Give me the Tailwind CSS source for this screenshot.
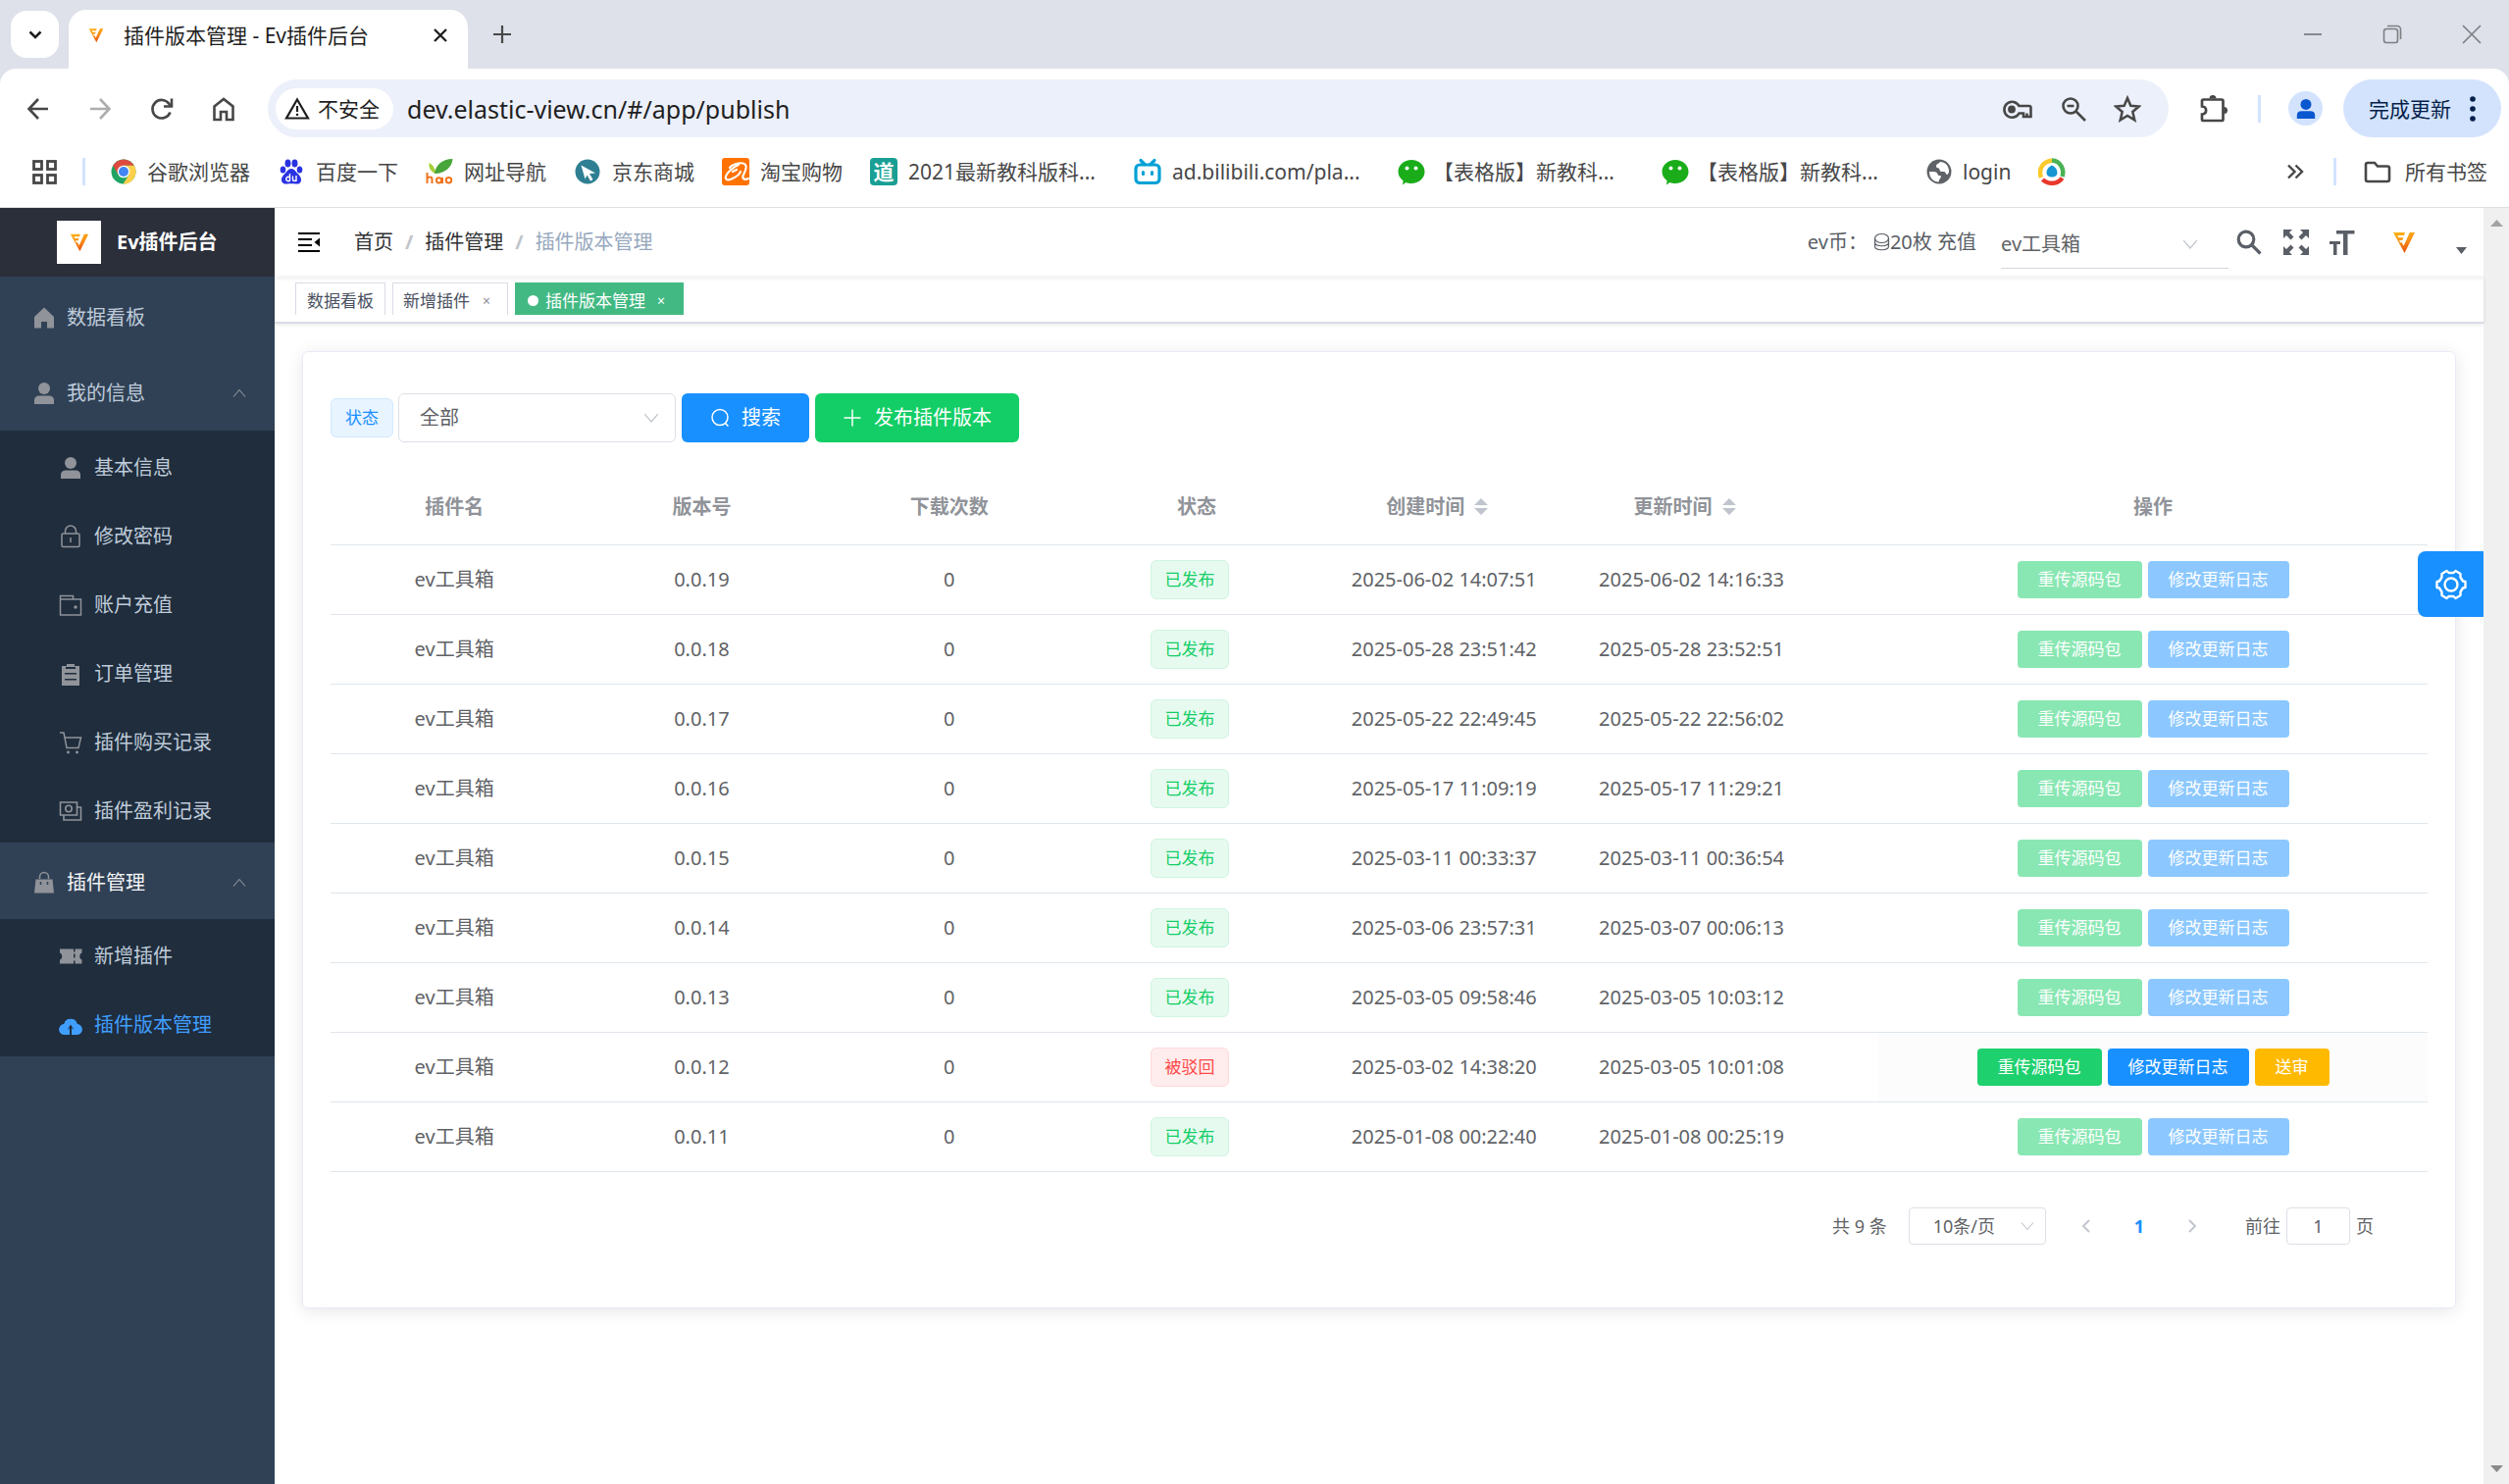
<!DOCTYPE html>
<html lang="zh-CN">
<head>
<meta charset="utf-8">
<title>插件版本管理 - Ev插件后台</title>
<script src="https://cdn.jsdelivr.net/npm/@tailwindcss/browser@4"></script>
</head>
<body class="flex min-h-screen flex-col bg-white font-['Noto_Sans','Noto_Sans_CJK_SC',sans-serif] text-[20px] leading-7 text-[#606266]">

<svg class="absolute size-0" aria-hidden="true">
  <defs>
    <linearGradient id="ev-g" x1="0" y1="0" x2="0.3" y2="1"><stop offset="0" stop-color="#fdb515"/><stop offset="0.5" stop-color="#fb9316"/><stop offset="1" stop-color="#e9560f"/></linearGradient>
  </defs>
  <symbol id="ev" viewBox="0 0 24 24"><path fill="url(#ev-g)" d="M1 2h12l-1 3H5.500l.8 2.300h5L10.300 10H7.200l.8 2.300h1.800l1.800 3.500L17.800 2H23L12.500 23z"/></symbol>
  <symbol id="down" viewBox="0 0 16 16"><path d="M2 4.500l6 7 6-7" fill="none" stroke="currentColor" stroke-width="1.100"/></symbol>
  <symbol id="up" viewBox="0 0 16 16"><path d="M2 11.500l6-7 6 7" fill="none" stroke="currentColor" stroke-width="1.100"/></symbol>
  <symbol id="user" viewBox="0 0 24 24"><circle cx="12" cy="7" r="6"/><path d="M2 23v-4c0-3 2-4.500 5-4.500h10c3 0 5 1.500 5 4.500v4z"/></symbol>
  <symbol id="wechat" viewBox="0 0 28 28"><path fill="#1aad19" d="M14 2c7.500 0 13.500 5.300 13.500 12S21.500 26 14 26c-2 0-4-.3-5.600-1L5 27.500l.6-4.300C2.500 21 .5 17.700.5 14 .5 7.300 6.500 2 14 2z"/><circle cx="9.500" cy="10.500" r="2" fill="#fff"/><circle cx="18.500" cy="10.500" r="2" fill="#fff"/></symbol>
</svg>

<header class="bg-[#dee1e9]">
  <div class="flex h-[70px] items-end pl-[11px]">
    <button class="mb-[11px] grid h-12 w-[49px] place-items-center rounded-2xl bg-white text-[#1f1f1f]" aria-label="搜索标签页"><svg class="size-4" viewBox="0 0 16 16"><path d="M2.500 5.500L8 11l5.500-5.500" fill="none" stroke="currentColor" stroke-width="2.500"/></svg></button>
    <div class="ml-[10px] flex h-[60px] w-[407px] items-center rounded-t-[18px] bg-white px-5 pt-2 pb-4 text-[21px] text-[#1f1f1f]">
      <svg class="size-4"><use href="#ev"/></svg>
      <span class="ml-5 flex-1 whitespace-nowrap">插件版本管理 - Ev插件后台</span>
      <button aria-label="关闭标签页"><svg class="size-4" viewBox="0 0 16 16"><path d="M2 2l12 12M14 2L2 14" stroke="#1f1f1f" stroke-width="2.300"/></svg></button>
    </div>
    <button class="mb-[25px] ml-[25px]" aria-label="新标签页"><svg class="size-5" viewBox="0 0 20 20"><path d="M10 1v18M1 10h18" stroke="#474747" stroke-width="2.200"/></svg></button>
    <div class="mb-[25px] ml-auto flex gap-[61px] pr-7 text-[#7d7f84]">
      <button aria-label="最小化"><svg class="size-5" viewBox="0 0 20 20"><path d="M1 10h18" stroke="currentColor" stroke-width="1.800"/></svg></button>
      <button aria-label="还原"><svg class="size-5" viewBox="0 0 20 20" fill="none" stroke="currentColor" stroke-width="1.600"><rect x="1.500" y="4.500" width="14" height="14" rx="2.500"/><path d="M5 1.500h10a3.500 3.500 0 0 1 3.500 3.500v10"/></svg></button>
      <button aria-label="关闭"><svg class="size-5" viewBox="0 0 20 20"><path d="M1 1l18 18M19 1L1 19" stroke="currentColor" stroke-width="1.700"/></svg></button>
    </div>
  </div>

  <div class="flex h-[81px] items-center rounded-t-2xl bg-white pr-2 pl-[26px] text-[#474747]">
    <div class="flex gap-[37px]">
      <button aria-label="后退"><svg class="size-[26px]" viewBox="0 0 26 26" fill="none" stroke="currentColor" stroke-width="2.600"><path d="M23 13H4M13 3L3.500 13l9.500 10"/></svg></button>
      <button class="text-[#adadad]" aria-label="前进"><svg class="size-[26px]" viewBox="0 0 26 26" fill="none" stroke="currentColor" stroke-width="2.600"><path d="M3 13h19M13 3l9.500 10-9.500 10"/></svg></button>
      <button aria-label="重新加载"><svg class="size-[26px]" viewBox="0 0 26 26" fill="none" stroke="currentColor" stroke-width="2.600"><path d="M21.500 16.500a9.300 9.300 0 1 1-1-8.500l2 2.500M23 2.500v8h-8"/></svg></button>
      <button aria-label="主页"><svg class="size-[26px]" viewBox="0 0 26 26" fill="none" stroke="currentColor" stroke-width="2.600"><path d="M3.500 10.500L13 3l9.500 7.500V24H16v-8h-6v8H3.500z"/></svg></button>
    </div>
    <div class="ml-[32px] flex h-[59px] flex-1 items-center rounded-full bg-[#ecf0fa] pr-7 pl-2">
      <button class="flex h-[42px] w-[120px] items-center gap-2 rounded-full bg-white pl-[9px] text-[21px] text-[#1f1f1f]"><svg class="size-[26px]" viewBox="0 0 26 26"><path d="M13 3.500L24 22.500H2z" fill="none" stroke="#1f1f1f" stroke-width="2.200"/><path d="M13 10v6M13 17.700v2.300" stroke="#1f1f1f" stroke-width="2.200"/></svg>不安全</button>
      <input class="ml-[14px] h-10 flex-1 bg-transparent text-[25px] text-[#1f1f1f] outline-none" aria-label="地址栏" value="dev.elastic-view.cn/#/app/publish">
      <div class="flex items-center gap-[27px]">
        <button aria-label="密码"><svg class="h-7 w-8" viewBox="0 0 32 28" fill="none" stroke="currentColor" stroke-width="2.600"><path d="M17.500 11a8 8 0 1 0 0 7.500H22V22h7.500v-9.500a1.500 1.500 0 0 0-1.500-1.500zM25.500 18.500V22"/><circle cx="10" cy="14.500" r="2.600" fill="currentColor"/></svg></button>
        <button aria-label="缩放"><svg class="size-7" viewBox="0 0 28 28" fill="none" stroke="currentColor" stroke-width="2.600"><circle cx="11" cy="11" r="7.500"/><path d="M16.500 16.500L26 26M7.500 11h7"/></svg></button>
        <button aria-label="收藏"><svg class="size-7" viewBox="0 0 28 28" fill="none" stroke="currentColor" stroke-width="2.500"><path d="M14 3l3.300 7.800 8.400.7-6.400 5.500 2 8.300L14 20.900l-7.300 4.400 2-8.300-6.400-5.500 8.400-.7z"/></svg></button>
      </div>
    </div>
    <button class="ml-[31px]" aria-label="扩展程序"><svg class="size-[30px]" viewBox="0 0 30 30" fill="none" stroke="currentColor" stroke-width="2.700"><path d="M4.500 5.500h18.500a1.500 1.500 0 0 1 1.500 1.500v18.500a1.500 1.500 0 0 1-1.500 1.500H4.500A1.500 1.500 0 0 1 3 25.500V20.500c5.500-.5 5.500-7.500 0-8V7a1.500 1.500 0 0 1 1.500-1.500z"/><path d="M10.500 4.500a3.500 3.500 0 0 1 7 0zM25.500 13a3.500 3.500 0 0 1 0 7z" fill="currentColor" stroke="none"/></svg></button>
    <span class="ml-[30px] h-7 w-[3px] bg-[#d3e3fd]"></span>
    <button class="ml-7 grid size-[35px] place-items-center rounded-full bg-[#d3e3fd] text-[#0b57d0]" aria-label="个人资料"><svg class="size-[22px]" viewBox="0 0 24 24" fill="currentColor"><use href="#user"/></svg></button>
    <button class="ml-[21px] flex h-[59px] w-[161px] items-center justify-between rounded-full bg-[#d3e3fd] px-[26px] text-[21px] whitespace-nowrap text-[#041e49]">完成更新<svg class="h-7 w-[6px]" viewBox="0 0 6 28" fill="currentColor"><circle cx="3" cy="4" r="2.800"/><circle cx="3" cy="14" r="2.800"/><circle cx="3" cy="24" r="2.800"/></svg></button>
  </div>

  <nav class="flex h-[61px] items-center border-b border-[#dcdfe3] bg-white pr-[22px] pb-3 pl-8 text-[21px] whitespace-nowrap text-[#474747]" aria-label="书签">
    <button aria-label="应用"><svg class="size-[27px]" viewBox="0 0 27 27" fill="none" stroke="currentColor" stroke-width="2.800"><rect x="2.500" y="2.500" width="8" height="8"/><rect x="16.500" y="2.500" width="8" height="8"/><rect x="2.500" y="16.500" width="8" height="8"/><rect x="16.500" y="16.500" width="8" height="8"/></svg></button>
    <span class="mx-[25px] h-7 w-[3px] bg-[#d3e3fd]"></span>
    <div class="flex flex-1 gap-[28px]">
      <a href="#" class="flex items-center gap-[10px]"><svg class="size-7" viewBox="0 0 28 28"><circle cx="14" cy="14" r="12.500" fill="#1fa463"/><path d="M3.200 7.700A12.500 12.500 0 0 1 24.800 7.700H14L8.500 17z" fill="#dd4b3e"/><path d="M14 7.700h10.800A12.500 12.500 0 0 1 13.500 26.500L19.500 17z" fill="#fdd04b"/><circle cx="14" cy="14" r="6.300" fill="#fff"/><circle cx="14" cy="14" r="5" fill="#4285f4"/></svg>谷歌浏览器</a>
      <a href="#" class="flex items-center gap-[11px]"><svg class="size-7" viewBox="0 0 28 28" fill="#2932e1"><ellipse cx="10.500" cy="5.500" rx="3" ry="4"/><ellipse cx="17.500" cy="5.500" rx="3" ry="4"/><ellipse cx="5.500" cy="12" rx="2.800" ry="3.600"/><ellipse cx="22.500" cy="12" rx="2.800" ry="3.600"/><path d="M14 11c3 0 4.500 3 6.500 5s4 4 3.500 7-3 4-5.500 3.500-7-.5-9 0S4.500 26 4 23s1.500-5 3.500-7 3.500-5 6.500-5z"/><path d="M12.500 16v8M12.500 20a2.200 2.200 0 1 0 0 3M15.500 18.500v3.500c0 2 3.500 2 3.500 0v-3.500M19 18v6" fill="none" stroke="#fff" stroke-width="1.400"/></svg>百度一下</a>
      <a href="#" class="flex items-center gap-[11px]"><svg class="size-7" viewBox="0 0 28 28"><path d="M10 14C9 9 6 6 3.500 5 3 10 5 14 10 16z" fill="#a5ce39"/><path d="M9 16C10 8 16 1 27.500 1 27 9 20 16 9 16z" fill="#47a53a"/><path d="M1.500 15v11M1.500 21c1-2 5-2 5 .5V26M17 20v6M28 23" fill="none" stroke="#f0741f" stroke-width="2"/><circle cx="13.500" cy="22.800" r="2.600" fill="none" stroke="#f0741f" stroke-width="2"/><circle cx="23.500" cy="22.800" r="2.800" fill="none" stroke="#f0741f" stroke-width="2"/></svg>网址导航</a>
      <a href="#" class="flex items-center gap-[11px]"><svg class="size-7" viewBox="0 0 28 28"><circle cx="14" cy="14" r="12.500" fill="#2f7f93"/><path d="M7.500 7.500l14.500 8-6 .5 3.500 6-2.500 1.500-3.500-6-2 4z" fill="#fff"/></svg>京东商城</a>
      <a href="#" class="flex items-center gap-[11px]"><svg class="size-7" viewBox="0 0 28 28"><rect width="28" height="28" rx="3" fill="#ff7200"/><path d="M8 10C12 5 22 4 24 7s0 6-2 10 1 6 5 4M17 7C12 9 5 15 4 19s3 4 7 2 7-4 8-7M11 14l4-2" fill="none" stroke="#fff" stroke-width="2.200" stroke-linecap="round"/></svg>淘宝购物</a>
      <a href="#" class="flex items-center gap-[11px]"><span class="grid size-7 place-items-center rounded-sm bg-[#1a9f94] text-[21px] font-bold text-white">道</span><span class="w-[202px]">2021最新教科版科...</span></a>
      <a href="#" class="flex items-center gap-[11px]"><svg class="size-7" viewBox="0 0 28 28" fill="none" stroke="#00a1d6" stroke-width="3.200" stroke-linecap="round"><rect x="2" y="7" width="24" height="18.500" rx="4"/><path d="M7 2.500l4 4M21 2.500l-4 4M9.500 14.500v2M18.500 14.500v2"/></svg><span class="w-[202px]">ad.bilibili.com/pla...</span></a>
      <a href="#" class="flex items-center gap-2"><svg class="size-7"><use href="#wechat"/></svg><span class="w-[205px]">【表格版】新教科...</span></a>
      <a href="#" class="flex items-center gap-2"><svg class="size-7"><use href="#wechat"/></svg><span class="w-[205px]">【表格版】新教科...</span></a>
      <a href="#" class="flex items-center gap-[10px]"><svg class="size-7" viewBox="0 0 28 28"><circle cx="14" cy="14" r="12.500" fill="#5f6368"/><path d="M4 14c3 0 6-.5 7.500 1s.5 3 3.500 3c1.500 0 1 2 0 3s-1 2-1.500 3.500C8 24.500 4 20 4 14zM15 4c5 0 9 4 9 9.500 0 1.500-1 3.500-2 3.500s-1.500-3-3-3-4.500.5-4.500-2-3.500-1-3.500-3.500S13.500 6 15 4z" fill="#fff"/></svg>login</a>
      <a href="#" class="flex items-center" aria-label="书签"><svg class="size-7" viewBox="0 0 28 28" fill="none" stroke-width="4.500"><path d="M3 20C0 12 4 4 14 2.500" stroke="#fcc92c"/><path d="M14 2.500C23 3 27 12 24.500 19" stroke="#4bb254"/><path d="M24.500 20.500C20 27 10 27.500 4.500 22" stroke="#e8372c"/><path d="M14 7.500c3 1.500 5.500 4 5.500 7.500 0 3-2.500 4.500-5.500 4.500S8.500 18 8.500 15c0-3.500 2.500-6 5.500-7.500z" fill="#1596d2"/></svg></a>
    </div>
    <button aria-label="更多书签"><svg class="size-[18px]" viewBox="0 0 18 18" fill="none" stroke="currentColor" stroke-width="2.400"><path d="M2 2.500L8.500 9 2 15.500M9.500 2.500L16 9l-6.500 6.500"/></svg></button>
    <span class="mr-7 ml-[30px] h-7 w-[3px] bg-[#d3e3fd]"></span>
    <a href="#" class="flex items-center gap-[14px]"><svg class="h-[23px] w-7" viewBox="0 0 28 23"><path d="M2 19V4a2 2 0 0 1 2-2h7l3 3.500h10a2 2 0 0 1 2 2V19a2 2 0 0 1-2 2H4a2 2 0 0 1-2-2z" fill="none" stroke="currentColor" stroke-width="2.600"/></svg>所有书签</a>
  </nav>
</header>

<div class="flex flex-1">
  <aside class="w-[280px] shrink-0 bg-[#304156] text-[#bfcbd9]">
    <div class="flex h-[70px] items-center gap-4 bg-[#2b2f3a] pl-[58px] font-bold text-white">
      <span class="grid h-11 w-[45px] place-items-center bg-white"><svg class="size-5"><use href="#ev"/></svg></span>Ev插件后台
    </div>
    <nav class="fill-[#909399] text-[#bfcbd9]" aria-label="主菜单">
      <a href="#" class="flex h-[78px] items-center gap-[11px] pt-[5px] pl-[33px]"><svg class="size-6" viewBox="0 0 24 24"><path d="M12 1.500L22 11v11.500h-7V16H9v6.500H2V11z"/></svg>数据看板</a>
      <button class="flex h-[79px] w-full items-center gap-[11px] pt-[3px] pr-7 pl-[33px] text-left"><svg class="size-6"><use href="#user"/></svg><span class="flex-1">我的信息</span><svg class="size-4 text-[#909399]"><use href="#up"/></svg></button>
      <div class="bg-[#1f2d3d] *:flex *:h-[70px] *:items-center *:gap-3 *:pt-[5px] *:pl-[60px]">
        <a href="#"><svg class="size-6"><use href="#user"/></svg>基本信息</a>
        <a href="#"><svg class="size-6" viewBox="0 0 24 24" fill="none" stroke="#909399" stroke-width="1.500"><rect x="3" y="9" width="18" height="13.500" rx="1.500"/><path d="M6.500 9V6.500a5.500 5.500 0 0 1 11 0V9M12 13v5"/></svg>修改密码</a>
        <a href="#"><svg class="size-6" viewBox="0 0 24 24" stroke="#909399" stroke-width="1.500"><path fill="none" d="M1.500 6h21v16h-21zM1.500 6V2.500h13V6"/><circle cx="17" cy="14" r="1"/></svg>账户充值</a>
        <a href="#"><svg class="size-6" viewBox="0 0 24 24"><path fill-rule="evenodd" d="M3 4h5V2h8v2h5v20H3zm3 7v1.500h12V11zm0 6v1.500h12V17zM7 5v2h10V5z"/></svg>订单管理</a>
        <a href="#"><svg class="size-6" viewBox="0 0 24 24" stroke="#909399" stroke-width="1.500"><path fill="none" d="M1 2h4l3 15.500h12L22.500 7H6"/><circle cx="9.500" cy="22" r=".7"/><circle cx="18.500" cy="22" r=".7"/></svg>插件购买记录</a>
        <a href="#"><svg class="size-6" viewBox="0 0 24 24" stroke="#909399" stroke-width="1.600"><path fill="none" d="M1.500 3h17v13h-17zM18.500 8h4v13H5v-5"/><circle fill="none" cx="10" cy="9.500" r="3.200"/></svg>插件盈利记录</a>
      </div>
      <button class="flex h-[78px] w-full items-center gap-[11px] pt-[3px] pr-7 pl-[33px] text-left text-[#f4f4f5]"><svg class="size-6" viewBox="0 0 24 24"><path d="M3.500 8.500h17L22 22.500H2z"/><path d="M7.500 8V6a4.500 4.500 0 0 1 9 0v2" fill="none" stroke="#909399" stroke-width="1.500"/><path d="M8.500 11v3M15.500 11v3" stroke="#304156" stroke-width="1.500"/></svg><span class="flex-1">插件管理</span><svg class="size-4 text-[#909399]"><use href="#up"/></svg></button>
      <div class="bg-[#1f2d3d] *:flex *:h-[70px] *:items-center *:gap-3 *:pt-[5px] *:pl-[60px]">
        <a href="#"><svg class="size-6" viewBox="0 0 24 24"><path d="M1 4.500h14v3h1.500v-3h7v4c-3 1-3 6 0 7v4h-7v-3H15v3H1v-4c3-1 3-6 0-7zM15 9.500v4h1.500v-4z" fill-rule="evenodd"/></svg>新增插件</a>
        <a href="#" class="text-[#409eff]" aria-current="page"><svg class="size-6 fill-[#409eff]" viewBox="0 0 24 24"><path d="M6 22a5.500 5.500 0 0 1-.8-11A7 7 0 0 1 18.800 11 5.500 5.500 0 0 1 18 22h-5v-7l2.500 2.300L12 11.500l-3.500 5.800L11 15v7z"/></svg>插件版本管理</a>
      </div>
    </nav>
  </aside>

  <div class="relative flex min-w-0 flex-1 flex-col">
    <div class="flex h-[70px] items-center pr-[17px] pl-6 text-[#303133]">
      <button aria-label="折叠菜单"><svg class="size-[22px]" viewBox="0 0 22 22" fill="none" stroke="#000" stroke-width="2.200"><path d="M0 2h22M0 8h14M0 14h14M0 20h22"/><path d="M22 6.500v9L16.500 11z" fill="#000" stroke="none"/></svg></button>
      <nav class="ml-[35px] flex gap-3" aria-label="面包屑"><a href="#">首页</a><span class="font-bold text-[#c0c4cc]">/</span><a href="#">插件管理</a><span class="font-bold text-[#c0c4cc]">/</span><span class="text-[#97a8be]">插件版本管理</span></nav>
      <div class="ml-auto flex items-center text-[#5a5e66]">
        <span class="whitespace-nowrap">ev币：</span>
        <svg class="ml-[6px] h-5 w-[17px]" viewBox="0 0 17 20" fill="none" stroke="currentColor" stroke-width="1.200"><ellipse cx="8.500" cy="6" rx="7" ry="4.500"/><path d="M1.500 6v4c0 5 14 5 14 0V6M1.500 10v4c0 5 14 5 14 0v-4"/></svg>
        <span class="whitespace-nowrap">20枚 <a href="#">充值</a></span>
        <div class="mt-1 ml-[25px] grid h-[50px] w-[232px] grid-cols-[1fr_auto] items-center border-b border-[#d4d7dd]">
          <select class="col-span-2 col-start-1 row-start-1 h-10 w-full appearance-none bg-transparent text-[#606266]" aria-label="插件"><option>ev工具箱</option></select>
          <svg class="pointer-events-none col-start-2 row-start-1 mr-[30px] size-[18px] text-[#c0c4cc]"><use href="#down"/></svg>
        </div>
        <button class="ml-2" aria-label="搜索"><svg class="size-[26px]" viewBox="0 0 26 26" fill="none" stroke="currentColor" stroke-width="3.200"><circle cx="10" cy="10" r="7.800"/><path d="M15.500 15.500l9 9"/></svg></button>
        <button class="ml-[22px]" aria-label="全屏"><svg class="size-[26px]" viewBox="0 0 26 26" fill="currentColor"><g id="arrow"><path d="M0 0h9L6 3l4.500 4.500-3 3L3 6 0 9z"/></g><use href="#arrow" transform="rotate(90 13 13)"/><use href="#arrow" transform="rotate(180 13 13)"/><use href="#arrow" transform="rotate(270 13 13)"/></svg></button>
        <button class="ml-[21px]" aria-label="字体大小"><svg class="size-[26px]" viewBox="0 0 26 26" fill="currentColor"><path d="M7 1h18.500v3.500h-7V26H14V4.500H7zM0 12h11v3H7.500v11H4V15H0z"/></svg></button>
        <button class="ml-[38px] flex items-end" aria-label="用户菜单"><svg class="size-6"><use href="#ev"/></svg><svg class="ml-[41px] h-[7px] w-[11px]" viewBox="0 0 11 7"><path d="M0 0h11L5.500 7z" fill="currentColor"/></svg></button>
      </div>
    </div>
    <nav class="flex h-12 items-start gap-[7px] border-b-2 border-[#d8dce5] pt-[6px] pl-[21px] text-[17px] shadow-[inset_0_5px_6px_-5px_rgba(0,21,41,0.12),0_1px_4px_rgba(0,0,0,0.1)]" aria-label="打开的页面">
      <a href="#" class="flex h-[33px] w-[92px] items-center justify-center border border-b-0 border-[#d8dce5] pt-1 text-[#495060]">数据看板</a>
      <a href="#" class="flex h-[33px] w-[118px] items-center justify-between border border-b-0 border-[#d8dce5] pt-1 pr-[17px] pl-[10px] text-[#495060]">新增插件<span class="text-[14px] text-[#8a8f99]">×</span></a>
      <a href="#" class="flex h-[33px] w-[172px] items-center bg-[#42b983] pt-1 pr-[19px] pl-[13px] text-white"><i class="mr-[7px] size-[11px] rounded-full bg-white"></i><span class="flex-1">插件版本管理</span><span class="text-[14px]">×</span></a>
    </nav>

    <main class="flex-1 px-7 pt-7 pb-[179px]">
      <section class="rounded-md border border-[#e6ebf5] px-7 pt-[42px] pb-16 shadow-[0_3px_17px_rgba(0,0,0,0.1)]">
        <form class="flex items-center">
          <label for="status" class="rounded-md border border-[#d1e9ff] bg-[#e8f4ff] px-[14px] py-[5px] text-[17px] text-[#1890ff]">状态</label>
          <div class="ml-[5px] grid h-[50px] w-[283px] grid-cols-[1fr_auto] items-center rounded-md border border-[#dcdfe6]">
            <select id="status" class="col-span-2 col-start-1 row-start-1 h-12 w-full appearance-none bg-transparent pl-[21px]"><option>全部</option></select>
            <svg class="pointer-events-none col-start-2 row-start-1 mr-[15px] size-[18px] text-[#c0c4cc]"><use href="#down"/></svg>
          </div>
          <button type="button" class="ml-[6px] flex h-[50px] items-center gap-3 rounded-md bg-[#1890ff] px-[29px] text-white"><svg class="size-5" viewBox="0 0 20 20" fill="none" stroke="#fff" stroke-width="1.500"><circle cx="10" cy="9.500" r="8"/><path d="M15 15l3.500 3.500"/></svg>搜索</button>
          <button type="button" class="ml-[6px] flex h-[50px] items-center gap-3 rounded-md bg-[#13ce66] px-7 text-white"><svg class="size-5" viewBox="0 0 20 20"><path d="M10 1.500v17M1.500 10h17" stroke="#fff" stroke-width="1.500"/></svg>发布插件版本</button>
        </form>

        <table class="mt-7 w-full table-fixed text-center">
          <colgroup><col class="w-[11.8%]"><col class="w-[11.8%]"><col class="w-[11.8%]"><col class="w-[11.8%]"><col class="w-[11.8%]"><col class="w-[11.8%]"><col><col class="w-[560px]"></colgroup>
          <thead class="text-[#909399]">
            <tr class="h-[76px] border-b border-[#dfe6ec]">
              <th>插件名</th><th>版本号</th><th>下载次数</th><th>状态</th>
              <th><span class="inline-flex items-center gap-[10px] pr-[14px]">创建时间<svg class="h-[17px] w-[14px]" viewBox="0 0 14 17" fill="#c0c4cc"><path d="M0 7l7-7 7 7zM0 10h14l-7 7z"/></svg></span></th>
              <th><span class="inline-flex items-center gap-[10px] pr-[14px]">更新时间<svg class="h-[17px] w-[14px]" viewBox="0 0 14 17" fill="#c0c4cc"><path d="M0 7l7-7 7 7zM0 10h14l-7 7z"/></svg></span></th>
              <th></th><th>操作</th>
            </tr>
          </thead>
          <tbody id="rows"></tbody>
        </table>

        <div class="mt-9 flex h-[38px] items-center justify-end pr-[55px] text-[18px]">
          <span>共 9 条</span>
          <div class="ml-[22px] grid h-[38px] w-[140px] grid-cols-[1fr_auto] items-center rounded border border-[#dcdfe6]">
            <select class="col-span-2 col-start-1 row-start-1 h-9 w-full appearance-none bg-transparent pl-6" aria-label="每页条数"><option>10条/页</option></select>
            <svg class="pointer-events-none col-start-2 row-start-1 mr-[10px] size-4 text-[#c0c4cc]"><use href="#down"/></svg>
          </div>
          <button class="ml-[33px] text-[#c0c4cc]" aria-label="上一页"><svg class="size-4" viewBox="0 0 16 16"><path d="M11 2L5 8l6 6" fill="none" stroke="currentColor" stroke-width="1.900"/></svg></button>
          <button class="mx-[41px] font-bold text-[#1890ff]">1</button>
          <button class="text-[#c0c4cc]" aria-label="下一页"><svg class="size-4" viewBox="0 0 16 16"><path d="M5 2l6 6-6 6" fill="none" stroke="currentColor" stroke-width="1.900"/></svg></button>
          <label for="page" class="ml-[46px]">前往</label>
          <input id="page" class="mx-[6px] h-[38px] w-[65px] rounded border border-[#dcdfe6] text-center" value="1">
          <span>页</span>
        </div>
      </section>
    </main>
    <button class="absolute top-[350px] right-0 grid size-[67px] place-items-center rounded-l-lg bg-[#1890ff]" aria-label="设置"><svg class="size-8" viewBox="0 0 32 32" fill="none" stroke="#fff" stroke-width="2.400" stroke-linejoin="round"><path d="M11.500 2l2 2h5l2-2 5 3v3.500l2.500 4 2.500.5v6l-2.500.5-2.500 4V27l-5 3-2-2h-5l-2 2-5-3v-3.500l-2.500-4-2.500-.5v-6l2.500-.5 2.500-4V5z"/><circle cx="16" cy="16" r="6.500"/></svg></button>
  </div>

  <div class="flex w-[26px] shrink-0 flex-col items-center justify-between bg-[#f0f0f0] py-3" aria-hidden="true">
    <svg class="h-[7px] w-[13px]" viewBox="0 0 13 7"><path d="M0 7L6.500 0 13 7z" fill="#a3a3a3"/></svg>
    <svg class="h-[7px] w-[13px]" viewBox="0 0 13 7"><path d="M0 0l6.500 7L13 0z" fill="#8a8a8a"/></svg>
  </div>
</div>

<script>
  const versions = [
    ['0.0.19', '2025-06-02 14:07:51', '2025-06-02 14:16:33'],
    ['0.0.18', '2025-05-28 23:51:42', '2025-05-28 23:52:51'],
    ['0.0.17', '2025-05-22 22:49:45', '2025-05-22 22:56:02'],
    ['0.0.16', '2025-05-17 11:09:19', '2025-05-17 11:29:21'],
    ['0.0.15', '2025-03-11 00:33:37', '2025-03-11 00:36:54'],
    ['0.0.14', '2025-03-06 23:57:31', '2025-03-07 00:06:13'],
    ['0.0.13', '2025-03-05 09:58:46', '2025-03-05 10:03:12'],
    ['0.0.12', '2025-03-02 14:38:20', '2025-03-05 10:01:08', true],
    ['0.0.11', '2025-01-08 00:22:40', '2025-01-08 00:25:19'],
  ];
  const tag = rejected => rejected
    ? '<span class="mr-[14px] inline-block h-10 w-20 rounded-md border border-[#ffdbdb] bg-[#ffeded] text-[17px] leading-[38px] text-[#ff4949]">被驳回</span>'
    : '<span class="mr-[14px] inline-block h-10 w-20 rounded-md border border-[#d0f5e0] bg-[#e7faf0] text-[17px] leading-[38px] text-[#13ce66]">已发布</span>';
  const actions = rejected => rejected
    ? '<button class="h-[38px] rounded bg-[#1fd06e] px-[21px]">重传源码包</button><button class="h-[38px] rounded bg-[#1890ff] px-[21px]">修改更新日志</button><button class="h-[38px] rounded bg-[#ffba00] px-[21px]">送审</button>'
    : '<button class="h-[38px] rounded bg-[#89e7b3] px-[21px]" disabled>重传源码包</button><button class="h-[38px] rounded bg-[#8cc8ff] px-[21px]" disabled>修改更新日志</button>';
  document.getElementById('rows').innerHTML = versions.map(([v, made, changed, rejected]) => `
    <tr class="h-[71px] border-b border-[#dfe6ec]">
      <td>ev工具箱</td><td>${v}</td><td>0</td><td>${tag(rejected)}</td><td>${made}</td><td>${changed}</td><td></td>
      <td class="${rejected ? 'bg-[#fcfcfc]' : ''}"><div class="flex justify-center gap-[6px] text-[17px] text-white">${actions(rejected)}</div></td>
    </tr>`).join('');
</script>
</body>
</html>
